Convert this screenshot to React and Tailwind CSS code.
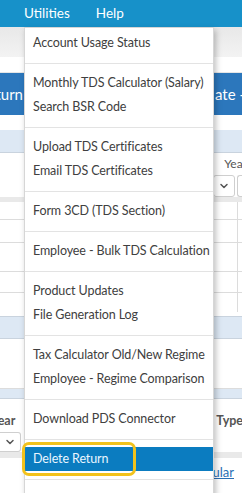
import { ChevronDown } from 'lucide-react';

const groups = [
  ['Account Usage Status'],
  ['Monthly TDS Calculator (Salary)', 'Search BSR Code'],
  ['Upload TDS Certificates', 'Email TDS Certificates'],
  ['Form 3CD (TDS Section)'],
  ['Employee - Bulk TDS Calculation'],
  ['Product Updates', 'File Generation Log'],
  ['Tax Calculator Old/New Regime', 'Employee - Regime Comparison'],
  ['Download PDS Connector'],
  ['Delete Return'],
  ['Import Deductees'],
];

function Menu() {
  return (
    <div className="absolute left-[24px] top-[27px] w-[190px] h-[520px] bg-white border border-[#d6d6d6] shadow-[2px_3px_6px_rgba(0,0,0,0.25)] pt-[3px]">
      {groups.map((items, gi) => (
        <div key={gi}>
          {gi > 0 && <div className="h-px bg-[#e3e3e3] my-[7.5px]" />}
          {items.map((label) => {
            const active = label === 'Delete Return';
            return (
              <div
                key={label}
                className={`h-[24px] flex items-center pl-[8px] text-[12.5px] tracking-[-0.1px] whitespace-nowrap ${
                  active ? 'bg-[#0b7cc0] text-[#eaf6ff]' : 'text-[#404040]'
                }`}
              >
                {label}
              </div>
            );
          })}
        </div>
      ))}
    </div>
  );
}

export default function App() {
  return (
    <div
      className="relative w-[242px] h-[493px] overflow-hidden bg-white"
      style={{ fontFamily: 'Lato, "Open Sans", sans-serif' }}
    >
      {/* Top nav */}
      <div className="h-[27px] bg-[#1791c9] flex items-center text-white text-[13.5px]">
        <span className="ml-[24px]">Utilities</span>
        <span className="ml-[26px]">Help</span>
      </div>

      {/* Sub header */}
      <div className="h-[30px] bg-gradient-to-b from-[#e8e8e8] to-[#f3f3f3]" />
      <div className="h-[16px] bg-white border-b border-[#e6e6e6]" />

      {/* Action buttons */}
      <div className="h-[42px] flex justify-between text-white text-[15px]">
        <div className="w-[24px] bg-[#2c77bc] flex items-center justify-end overflow-hidden whitespace-nowrap">
          <span className="shrink-0 mr-[1px]">Return</span>
        </div>
        <div className="w-[40px] bg-[#2c77bc] flex items-center overflow-hidden">
          <span className="ml-[13px] whitespace-nowrap">ate -</span>
        </div>
      </div>

      <div className="h-[15px]" />
      <div className="h-[23px] bg-[#dde8f4] border-b border-[#c9d3de]" />

      {/* Filter row */}
      <div className="h-[22px] flex justify-end items-center text-[12px] text-[#555]">
        <span className="-mr-[5px]">Year</span>
      </div>
      <div className="h-[22px] flex justify-end items-start gap-[2px]">
        <div className="w-[22px] h-[22px] border border-[#cfcfcf] rounded-[3px] flex items-center justify-center text-[#555]">
          <ChevronDown size={12} strokeWidth={3} />
        </div>
        <div className="w-[5px] h-[22px] border border-r-0 border-[#cfcfcf] rounded-l-[3px]" />
      </div>
      <div className="h-[5px] bg-[#e9e9e9]" />

      {/* Table rows */}
      <div className="relative">
        <div className="absolute right-[4px] top-0 h-[110px] w-px bg-[#dcdcdc]" />
        <div className="h-[18px] border-b border-[#dcdcdc]" />
        <div className="h-[23px] border-b border-[#dcdcdc]" />
        <div className="h-[29px] border-b border-[#dcdcdc]" />
        <div className="h-[21px] border-b border-[#dcdcdc]" />
        <div className="h-[23px]" />
        <div className="h-[23px] bg-[#dde8f4] border-y border-[#c9d3de]" />
        <div className="h-[50px] border-b border-[#dcdcdc]" />
        <div className="h-[10px] bg-[#dde8f4] border-b border-[#c9d3de]" />
      </div>

      {/* Lower filter */}
      <div className="h-[33px] flex justify-between items-end pb-[1px] text-[12.5px] text-[#555] font-bold">
        <span className="-ml-[9px]">Year</span>
        <span className="-mr-[1px]">Type</span>
      </div>
      <div className="h-[20px] flex items-start">
        <div className="w-[21px] h-[20px] border border-l-0 border-[#cfcfcf] rounded-r-[3px] flex items-center justify-center text-[#555]">
          <ChevronDown size={12} strokeWidth={3} />
        </div>
      </div>
      <div className="h-[6px] bg-[#e9e9e9]" />
      <div className="h-[30px] flex justify-end items-center text-[13px]">
        <span className="text-[#2a6fb5] underline mr-[8px]">Regular</span>
      </div>

      <Menu />

      {/* Highlight annotation */}
      <div className="absolute left-[22px] top-[442px] w-[114px] h-[34px] border-[3px] border-[#f2c21b] rounded-[7px]" />
    </div>
  );
}
